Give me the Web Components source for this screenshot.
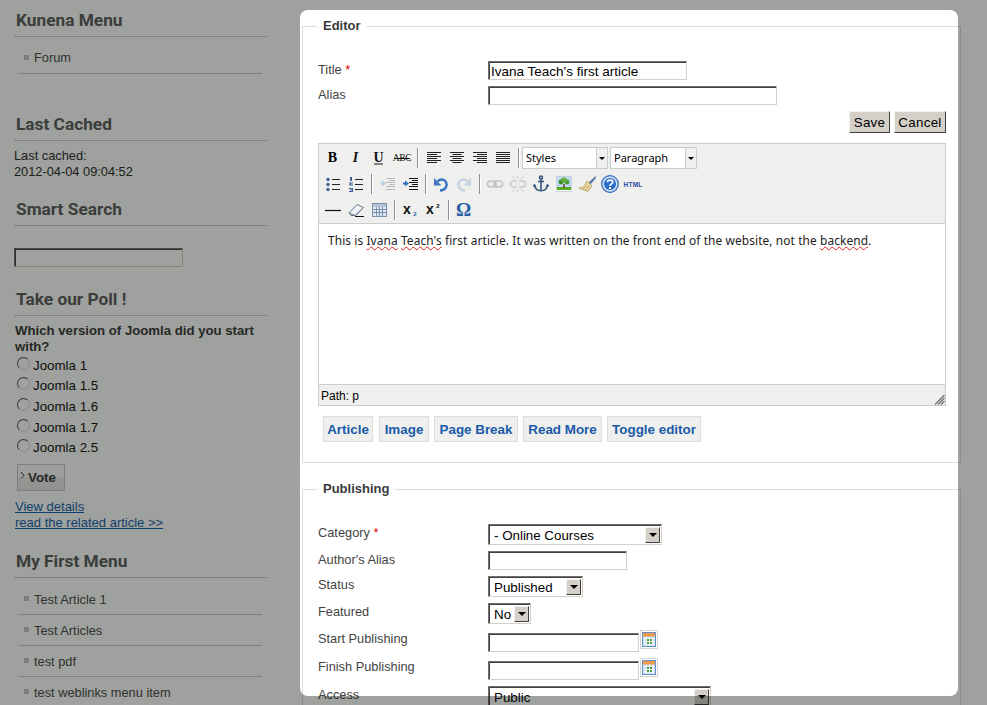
<!DOCTYPE html>
<html>
<head>
<meta charset="utf-8">
<title>Article editor</title>
<style>
html, body { margin: 0; height: 100%; overflow: hidden; background: #fff; }
body { font: 12.8px "Liberation Sans", Arial, sans-serif; color: #2c2c2c; }
</style>
</head>
<body>
<page-shell>
  <side-module slot="side" title="Kunena Menu" style="margin-top:8px">
    <side-menu><side-item>Forum</side-item></side-menu>
  </side-module>
  <side-module slot="side" title="Last Cached" style="margin-top:38px">
    <div style="padding-top:7px;line-height:16px">Last cached:<br>2012-04-04 09:04:52</div>
  </side-module>
  <side-module slot="side" title="Smart Search" style="margin-top:17px">
    <div style="padding-top:22px"><classic-input width="169"></classic-input></div>
  </side-module>
  <side-module slot="side" title="Take our Poll !" style="margin-top:20px">
    <poll-box question="Which version of Joomla did you start with?">
      <poll-option>Joomla 1</poll-option>
      <poll-option>Joomla 1.5</poll-option>
      <poll-option>Joomla 1.6</poll-option>
      <poll-option>Joomla 1.7</poll-option>
      <poll-option>Joomla 2.5</poll-option>
    </poll-box>
  </side-module>
  <side-module slot="side" title="My First Menu" style="margin-top:18px">
    <side-menu style="--lh:32px">
      <side-item>Test Article 1</side-item>
      <side-item>Test Articles</side-item>
      <side-item>test pdf</side-item>
      <side-item>test weblinks menu item</side-item>
    </side-menu>
  </side-module>

  <edit-fieldset slot="modal" legend="Editor">
    <form-row label="Title" required><classic-input width="199" value="Ivana Teach's first article"></classic-input></form-row>
    <form-row label="Alias"><classic-input width="289"></classic-input></form-row>
    <save-bar></save-bar>
    <editor-box></editor-box>
    <btn-bar>
      <link-btn style="width:50px;margin-right:1px">Article</link-btn>
      <link-btn style="width:50px">Image</link-btn>
      <link-btn style="width:84px">Page Break</link-btn>
      <link-btn style="width:79px">Read More</link-btn>
      <link-btn style="width:94px">Toggle editor</link-btn>
    </btn-bar>
  </edit-fieldset>
  <edit-fieldset slot="modal" legend="Publishing" style="margin-top:18px">
    <form-row label="Category" required><classic-select width="174">- Online Courses</classic-select></form-row>
    <form-row label="Author's Alias"><classic-input width="139"></classic-input></form-row>
    <form-row label="Status"><classic-select width="95">Published</classic-select></form-row>
    <form-row label="Featured"><classic-select width="43">No</classic-select></form-row>
    <form-row label="Start Publishing"><date-field></date-field></form-row>
    <form-row label="Finish Publishing"><date-field></date-field></form-row>
    <form-row label="Access"><classic-select width="223">Public</classic-select></form-row>
  </edit-fieldset>
</page-shell>

<script>
function define(name, css, html, setup) {
    customElements.define(name, class extends HTMLElement {
        constructor() {
            super();
            this.attachShadow({ mode: 'open' });
        }
        connectedCallback() {
            const body = typeof html === 'function' ? html(this) : html;
            this.shadowRoot.innerHTML = `<style>${css}</style>${body}`;
            setup && setup(this);
        }
    });
}

// page with the sidebar underneath and the lightbox above it
define('page-shell', `
    :host { display: block; height: 705px; position: relative; overflow: hidden; }
    .side { width: 253px; margin-left: 14px; display: flex; flex-direction: column; }
    .modal { position: absolute; left: 300px; top: 10px; width: 658px; height: 686px;
             background: #fff; border-radius: 8px; }
    .inner { width: 659px; margin-left: 2px; padding-top: 8px; display: flex; flex-direction: column; }
    .mask { position: absolute; left: 300px; top: 10px; width: 658px; height: 686px;
            border-radius: 8px; box-shadow: 0 0 0 1500px rgba(8, 12, 4, .39); pointer-events: none; }
`, `
    <div class="side"><slot name="side"></slot></div>
    <div class="modal"><div class="inner"><slot name="modal"></slot></div></div>
    <div class="mask"></div>
`);

define('side-module', `
    :host { display: block; }
    h3 { margin: 0; height: 28px; border-bottom: 1px solid #cbcbcb; padding-left: 2px;
         font: 700 17.300px/25px Roboto, "Open Sans", sans-serif; color: #5c5c5c; }
`, el => `<h3>${el.getAttribute('title')}</h3><slot></slot>`);

define('side-menu', `
    :host { display: block; margin: 6px 5px 0; }
`, `<slot></slot>`);

define('side-item', `
    :host { display: block; height: 30px; border-bottom: 1px solid #cbcbcb; line-height: var(--lh, 30px);
            padding-left: 15px; color: #4a4a4a; position: relative; }
    i { position: absolute; left: 5px; top: 12px; width: 5px; height: 5px; background: #c4c4c4; }
`, `<i></i><slot></slot>`);

define('poll-box', `
    :host { display: block; padding: 7px 0 0 1px; }
    .q { font-weight: 700; font-size: 13.200px; line-height: 16px; color: #3a3a3a; width: 250px; }
    .vote { display: flex; align-items: center; box-sizing: border-box; width: 48px; height: 27px;
            margin: 6px 0 8px 2px; padding-left: 3px; gap: 3px; border: 1px solid #c8c8c8;
            background: linear-gradient(#fafafa, #fafafa 50%, #eee 50%, #e6e6e6);
            font-weight: 700; font-size: 13.33px; color: #3a3a3a; }
    .vote svg { flex: none; margin-top: -3px; }
    a { display: block; font-size: 13px; line-height: 16px; color: #155fae; text-decoration: underline; }
`, el => `
    <div class="q">${el.getAttribute('question')}</div>
    <slot></slot>
    <div class="vote"><svg width="4" height="7" viewBox="0 0 4 7"><path d="M0 0l3 3.500-3 3" fill="none" stroke="#333"/></svg>Vote</div>
    <a>View details</a>
    <a>read the related article &gt;&gt;</a>
`);

define('poll-option', `
    :host { display: flex; height: 20.6px; align-items: center; font-size: 13.33px; color: #111; }
    i { box-sizing: border-box; flex: none; width: 13px; height: 13px; margin: -4px 3px 0 2px; border-radius: 50%;
        background: #fff; border: 1.500px solid; border-color: #555 #ddd #ddd #555; }
`, `<i></i><slot></slot>`);

define('classic-input', `
    :host { display: block; }
    .f { box-sizing: border-box; height: 19px; padding-left: 2px; overflow: hidden;
         border: 1px solid; border-color: #707070 #d4d0c8 #d4d0c8 #707070;
         box-shadow: inset 1px 1px 0 #404040; background: #fff;
         font-size: 13.500px; line-height: 19px; color: #000; white-space: nowrap; }
`, el => `<div class="f" style="width:${el.getAttribute('width')}px">${el.getAttribute('value') || ''}</div>`);

define('classic-select', `
    :host { display: block; }
    .f { box-sizing: border-box; height: 21px; display: flex; align-items: center; background: #fff;
         border: 1px solid; border-color: #707070 #d4d0c8 #d4d0c8 #707070;
         box-shadow: inset 1px 1px 0 #404040; padding: 1px 1px 1px 5px;
         font-size: 13.33px; color: #000; }
    .t { flex: 1; white-space: nowrap; overflow: hidden; padding-top: 2px; }
    .a { flex: none; width: 15px; height: 16px; margin: 1px 0 0; box-sizing: border-box;
         background: #d4d0c8; border: 1px solid; border-color: #f4f2ec #404040 #404040 #f4f2ec;
         display: flex; align-items: center; justify-content: center; }
    .a i { border: 4px solid transparent; border-top-color: #000; border-bottom: 0; }
`, el => `<div class="f" style="width:${el.getAttribute('width')}px"><span class="t"><slot></slot></span><span class="a"><i></i></span></div>`);

define('date-field', `
    :host { display: flex; align-items: flex-start; gap: 1px; }
    classic-input { margin-top: 3px; }
    svg { display: block; flex: none; }
`, `
    <classic-input width="151"></classic-input>
    <svg width="18" height="19" viewBox="0 0 18 19">
      <rect x=".5" y=".5" width="17" height="18" fill="#fff" stroke="#d6d6d6"/>
      <rect x="2.500" y="2.500" width="13" height="14" fill="#cfe0f3" stroke="#5f8fc8"/>
      <rect x="3" y="3" width="12" height="3.500" fill="#ee9a4d"/>
      <path d="M3 8.500h12M3 11.500h12M3 14h12M6.500 7v9M9.500 7v9M12.500 7v9" stroke="#f2f6fb"/>
      <rect x="7" y="9" width="2" height="2" fill="#4aa03c"/><rect x="10" y="12" width="2" height="2" fill="#4aa03c"/>
      <rect x="7" y="12" width="2" height="2" fill="#4aa03c"/><rect x="10" y="9" width="2" height="2" fill="#4aa03c"/>
    </svg>
`);

define('edit-fieldset', `
    :host { display: block; }
    fieldset { margin: 0; border: 1px solid #ddd; padding: 27px 14px 20px 15px; min-width: 0; }
    legend { margin-left: -1px; padding: 0 6px; font-weight: 700; font-size: 13px; line-height: 16px; color: #3a3a3a; }
`, el => `<fieldset><legend>${el.getAttribute('legend')}</legend><slot></slot></fieldset>`);

define('form-row', `
    :host { display: flex; margin-bottom: 6px; }
    label { flex: none; width: 170px; padding-top: 1px; line-height: 15px; color: #444; }
    b { color: #d00; font-weight: 400; }
`, el => `<label>${el.getAttribute('label')}${el.hasAttribute('required') ? ' <b>*</b>' : ''}</label><slot></slot>`);

define('save-bar', `
    :host { display: flex; justify-content: flex-end; gap: 4px; margin-bottom: 10px; }
    span { box-sizing: border-box; height: 22px; display: flex; align-items: center; justify-content: center;
           background: #d4d0c8; border: 1px solid; border-color: #f4f2ec #404040 #404040 #f4f2ec;
           font-size: 13.33px; color: #000; letter-spacing: .3px; }
`, `<span style="width:41px">Save</span><span style="width:52px">Cancel</span>`);

const L = (ys, x1, x2) => ys.map(y => `M${x1} ${y}H${x2}`).join('');
const aligned = (a, b, c, d) =>
    `<path d="${L([4.5, 8.5, 12.5], a, b)}${L([6.5, 10.5, 14.5], c, d)}" stroke="#222"/>`;
const list = `<path d="${L([5.5, 10.5, 15.5], 9, 17)}" stroke="#222"/>`;
const paleLines = `<path d="${L([4.5, 8.5, 12.5, 15.5], 8, 17)}${L([6.5, 10.5], 11, 17)}" stroke="#b4b9b9"/>`;
const darkLines = `<path d="${L([4.5, 8.5, 12.5, 15.5], 8, 17)}${L([6.5, 10.5], 11, 17)}" stroke="#111"/>`;
const txt = (s, style) => `<text x="9.500" y="14" text-anchor="middle" style="${style}">${s}</text>`;
const serif = 'font-family:\'Liberation Serif\',serif;font-weight:700;';
const sans = 'font-family:\'Liberation Sans\',sans-serif;font-weight:700;';
const chain = c => `<g fill="none" stroke="${c}" stroke-width="1.600"><rect x="2.500" y="7" width="8.500" height="6" rx="3"/><rect x="9" y="7" width="8.500" height="6" rx="3"/></g>`;
const undoPath = 'M9 16.500C15 16.500 16.500 11 15 8 13.500 5 9 4.500 6.500 7.500';

const ICONS = {
    bold: txt('B', serif + 'font-size:14px;fill:#000'),
    italic: txt('I', serif + 'font-style:italic;font-size:14px;fill:#111'),
    underline: txt('U', serif + 'font-size:14px;fill:#111') + '<path d="M5 16H14" stroke="#111"/>',
    strike: `<text x="10" y="13" text-anchor="middle" style="${serif}font-weight:400;font-size:9.500px;letter-spacing:-.3px;fill:#111">ABC</text><path d="M2 10.500H18" stroke="#111"/>`,
    left: aligned(3, 17, 3, 13),
    center: aligned(3, 17, 5.5, 14.5),
    right: aligned(3, 17, 7, 17),
    justify: aligned(3, 17, 3, 17),
    bullist: '<g fill="#3e5f9c"><circle cx="5" cy="5.500" r="1.700"/><circle cx="5" cy="10.500" r="1.700"/><circle cx="5" cy="15.500" r="1.700"/></g>' + list,
    numlist: '<path d="M4 3h2v4H4zM3 8.500h4v1H5v1h2v1H3v-1h1v-1H3zM3 14h4v4H3v-1h3v-.5H4v-1h2V15H3z" fill="#3e5f9c"/>' + list,
    outdent: paleLines + '<path d="M2 9.500l4-3v2h2v2H6v2z" fill="#bcd0e6"/>',
    indent: darkLines + '<path d="M8 9.500l-4-3v2H2v2h2v2z" fill="#2f6fc4"/>',
    undo: `<path d="${undoPath}" fill="none" stroke="#3f78c0" stroke-width="2.600"/><path d="M3 4v7.500h7.500z" fill="#3f78c0"/>`,
    redo: `<g transform="matrix(-1 0 0 1 20 0)"><path d="${undoPath}" fill="none" stroke="#c6d4e4" stroke-width="2.600"/><path d="M3 4v7.500h7.500z" fill="#c6d4e4"/></g>`,
    link: chain('#bcc2c8'),
    unlink: chain('#c6cbd0') + '<path d="M10 1.500v4M5 2.500l2 3M15 2.500l-2 3M10 14.500v4M5 17.500l2-3M15 17.500l-2-3" stroke="#c6cbd0"/><rect x="8.500" y="6" width="3" height="8" fill="#eff0ee"/>',
    anchor: '<g fill="none" stroke="#36557f" stroke-width="1.600"><circle cx="10" cy="3.500" r="1.500"/><path d="M10 5v12M7 7.500h6M3.500 11C4 15 7 16.800 10 16.800S16 15 16.500 11"/></g><path d="M1.500 12.500l2-3 2 3zM14.500 12.500l2-3 2 3z" fill="#36557f"/>',
    image: '<rect x="2.500" y="2.500" width="15" height="15" fill="#fff" stroke="#c8d2d8"/><rect x="3" y="3" width="14" height="10" fill="#bcd8f2"/><rect x="3" y="13" width="14" height="3" fill="#57a81e"/><path d="M9.200 10h1.600v4H9.200z" fill="#6b4a1e"/><circle cx="7" cy="8" r="2.400" fill="#3e8a2a"/><circle cx="13" cy="8" r="2.400" fill="#4f9c30"/><circle cx="10" cy="6.200" r="2.800" fill="#63ad3a"/>',
    cleanup: '<path d="M18.500 2l-7 6.500 2 2L19 4z" fill="#5c7ea6"/><path d="M10 7l5 5-4 5.500-9-3.500c3 0 6-2 8-7z" fill="#e9d9a0" stroke="#a89a68" stroke-width=".8"/><path d="M6 15l4-4M9 16l3-4" stroke="#b9a868"/>',
    help: '<circle cx="10" cy="10" r="8.300" fill="#cfe0f7" stroke="#2a62b8" stroke-width="1.200"/><circle cx="10" cy="10" r="6" fill="#2a6ecb"/><path d="M7.500 8.200C7.500 5.300 12.700 5.300 12.700 8.200 12.700 10 10 9.800 10 12" fill="none" stroke="#fff" stroke-width="1.700"/><rect x="9" y="13" width="2" height="2" fill="#fff"/>',
    html: `<text x="10" y="12.500" text-anchor="middle" style="${sans}font-size:6.500px;letter-spacing:.2px;fill:#2c4ca0">HTML</text>`,
    hr: '<path d="M2 10.500H18" stroke="#111" stroke-width="1.200"/>',
    eraser: '<path d="M3 13L11 4.500 17.500 7.500 10 15.500 5 15.500z" fill="#eef1f5" stroke="#66788c"/><path d="M3 13l6 2.500L17.500 7.500" fill="none" stroke="#66788c"/><path d="M9 16.500H18" stroke="#111"/>',
    table: '<rect x="3.500" y="3.500" width="14" height="13" fill="#dfe8f2" stroke="#7a90ad"/><rect x="4" y="4" width="13" height="3" fill="#b6c6da"/><path d="M4 9.500H17M4 12.500H17M7.500 7V16M10.500 7V16M13.500 7V16" stroke="#7a90ad"/>',
    sub: `<text x="7" y="14" text-anchor="middle" style="${sans}font-size:14px;fill:#111">x</text><text x="15" y="15.500" text-anchor="middle" style="${sans}font-size:6px;fill:#2f5fb0">2</text>`,
    sup: `<text x="7" y="14" text-anchor="middle" style="${sans}font-size:14px;fill:#111">x</text><text x="15" y="8" text-anchor="middle" style="${sans}font-size:6px;fill:#111">2</text>`,
    omega: txt('Ω', serif + 'font-size:19px;fill:#2a5ca8').replace('y="14"', 'y="16"')
};

define('tb-icon', `
    :host { display: block; flex: none; width: 23px; height: 26px; }
    svg { display: block; margin: 3px auto 0; }
`, el => `<svg width="20" height="20" viewBox="0 0 20 20">${ICONS[el.getAttribute('name')]}</svg>`);

define('tb-sep', `
    :host { display: flex; flex: none; height: 26px; align-items: center; justify-content: center; }
    i { display: block; width: 1px; height: 20px; background: #8b8f9a; box-shadow: 1px 0 0 #fff; }
`, `<i></i>`);

define('tb-list', `
    :host { display: flex; flex: none; height: 26px; align-items: center; }
    .t { box-sizing: border-box; height: 22px; padding-left: 3px; background: #fff; border: 1px solid #ccc;
         font: 11px/20px "Noto Sans", sans-serif; color: #000; }
    .a { box-sizing: border-box; width: 11px; height: 22px; border: 1px solid #ccc; border-left: 0;
         display: flex; align-items: center; justify-content: center; }
    .a i { border: 3px solid transparent; border-top-color: #000; border-bottom: 0; }
`, el => `<div class="t" style="width:${el.getAttribute('width')}px"><slot></slot></div><div class="a"><i></i></div>`);

function toolbarRow(items) {
    return items.map(it => {
        if (typeof it === 'number') return `<tb-sep style="width:${it}px"></tb-sep>`;
        return `<tb-icon name="${it}"></tb-icon>`;
    }).join('');
}

define('editor-box', `
    :host { display: block; border: 1px solid #ccc; margin-bottom: 10px; position: relative; }
    .tools { height: 78px; padding: 1px 0 0 2px; background: #eff0ee; border-bottom: 1px solid #ccc; }
    .row { display: flex; height: 26px; }
    .body { box-sizing: border-box; height: 160px; padding: 9px 9px 0; background: #fff;
            font: 11.900px/15px "Noto Sans", sans-serif; letter-spacing: .1px; color: #222; white-space: nowrap; }
    .body span { text-decoration: underline wavy #d22; text-decoration-thickness: 1px; text-underline-offset: 1px; }
    .path { height: 20px; border-top: 1px solid #ccc; padding-left: 2px; background: #eff0ee;
            font-size: 12px; line-height: 22px; color: #000; }
    svg { position: absolute; right: 0; bottom: 0; }
`, `
    <div class="tools">
      <div class="row">${toolbarRow(['bold', 'italic', 'underline', 'strike', 9, 'left', 'center', 'right', 'justify', 8])}
        <tb-list width="75">Styles</tb-list><tb-list width="76" style="margin-left:2px">Paragraph</tb-list></div>
      <div class="row">${toolbarRow(['bullist', 'numlist', 9, 'outdent', 'indent', 7, 'undo', 'redo', 8, 'link', 'unlink', 'anchor', 'image', 'cleanup', 'help', 'html'])}</div>
      <div class="row">${toolbarRow(['hr', 'eraser', 'table', 8, 'sub', 'sup', 8, 'omega'])}</div>
    </div>
    <div class="body">This is <span>Ivana</span> <span>Teach's</span> first article. It was written on the front end of the website, not the <span>backend</span>.</div>
    <div class="path">Path: p</div>
    <svg width="11" height="11" viewBox="0 0 11 11"><path d="M10.500 1L1 10.500M10.500 4L4 10.500M10.500 7L7 10.500" stroke="#777" stroke-width="1.500"/></svg>
`);

define('btn-bar', `
    :host { display: flex; gap: 5px; padding-left: 5px; }
`, `<slot></slot>`);

define('link-btn', `
    :host { display: block; box-sizing: border-box; height: 26px; text-align: center; background: #eff0ee;
            border: 1px solid #ddd; font-weight: 700; font-size: 13.400px; line-height: 25px; color: #1a5aa8; white-space: nowrap; }
`, `<slot></slot>`);
</script>
</body>
</html>
